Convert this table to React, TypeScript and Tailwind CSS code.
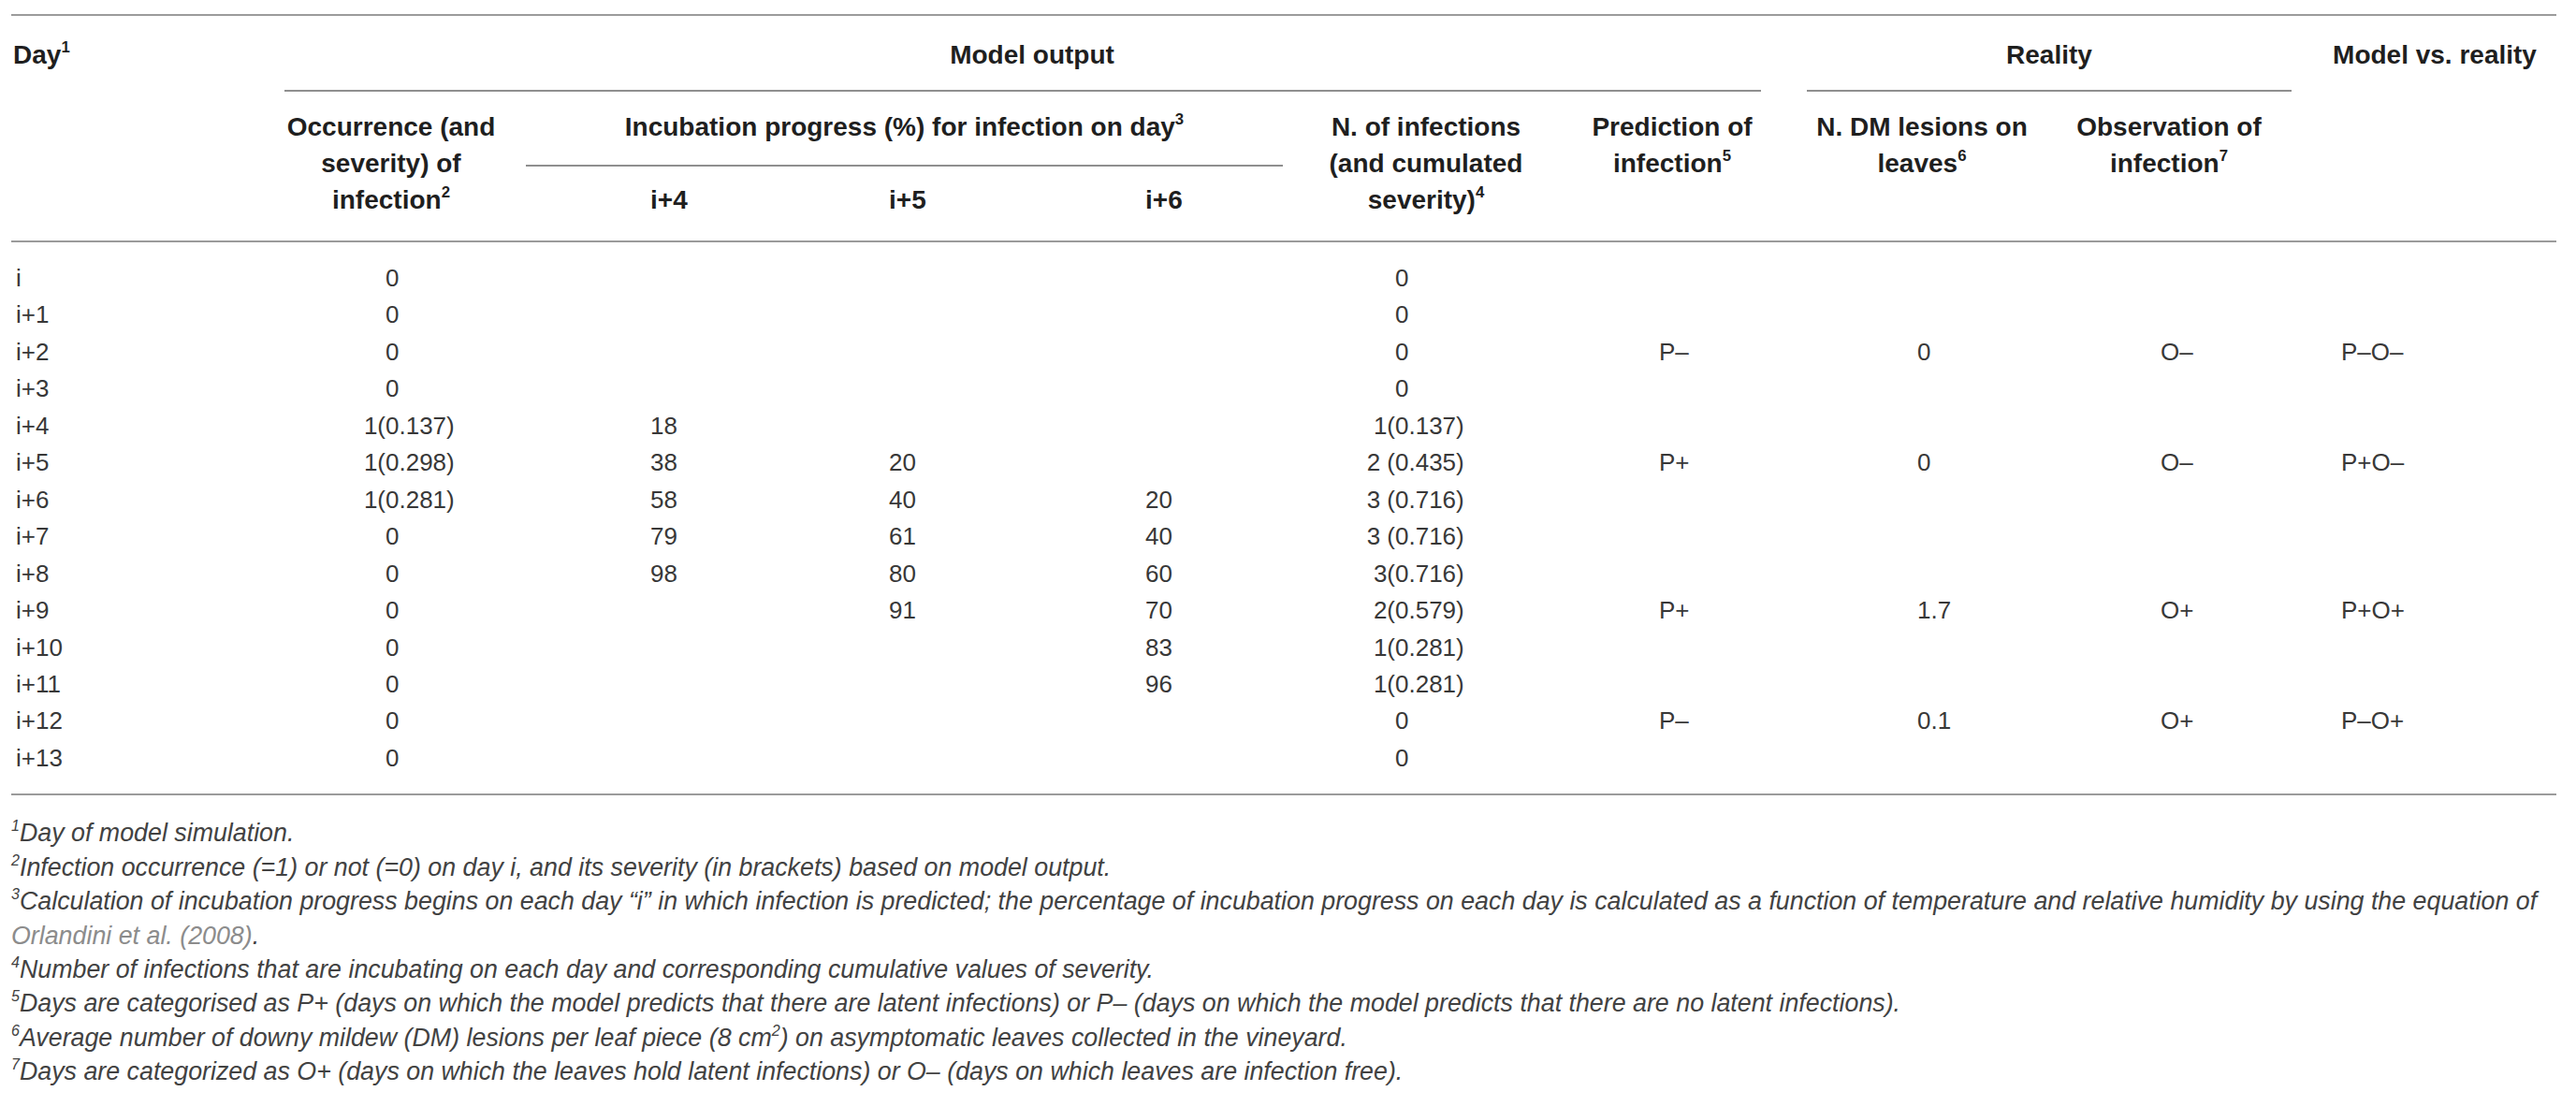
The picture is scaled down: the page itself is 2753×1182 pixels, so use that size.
type Row = {
  day: string;
  occ: string;
  i4?: string;
  i5?: string;
  i6?: string;
  ninf: string;
  pred?: string;
  ndm?: string;
  obs?: string;
  mvr?: string;
};

const rows: Row[] = [
  { day: "i", occ: "0", ninf: "0" },
  { day: "i+1", occ: "0", ninf: "0" },
  { day: "i+2", occ: "0", ninf: "0", pred: "P–", ndm: "0", obs: "O–", mvr: "P–O–" },
  { day: "i+3", occ: "0", ninf: "0" },
  { day: "i+4", occ: "1(0.137)", i4: "18", ninf: "1(0.137)" },
  { day: "i+5", occ: "1(0.298)", i4: "38", i5: "20", ninf: "2 (0.435)", pred: "P+", ndm: "0", obs: "O–", mvr: "P+O–" },
  { day: "i+6", occ: "1(0.281)", i4: "58", i5: "40", i6: "20", ninf: "3 (0.716)" },
  { day: "i+7", occ: "0", i4: "79", i5: "61", i6: "40", ninf: "3 (0.716)" },
  { day: "i+8", occ: "0", i4: "98", i5: "80", i6: "60", ninf: "3(0.716)" },
  { day: "i+9", occ: "0", i5: "91", i6: "70", ninf: "2(0.579)", pred: "P+", ndm: "1.7", obs: "O+", mvr: "P+O+" },
  { day: "i+10", occ: "0", i6: "83", ninf: "1(0.281)" },
  { day: "i+11", occ: "0", i6: "96", ninf: "1(0.281)" },
  { day: "i+12", occ: "0", ninf: "0", pred: "P–", ndm: "0.1", obs: "O+", mvr: "P–O+" },
  { day: "i+13", occ: "0", ninf: "0" },
];

// split "1(0.137)" so the digit after the bracket lines up with a bare "0"
function split(v: string): [string, string] {
  const k = v.indexOf("(");
  return k < 0 ? ["", v] : [v.slice(0, k + 1), v.slice(k + 1)];
}

const cols =
  "grid grid-cols-[292px_228px_308px_260px_300px_248px_278px_256px_272px_278px]";

function Sup({ children }: { children: React.ReactNode }) {
  return <sup className="text-[0.6em] top-[-0.7em]">{children}</sup>;
}

function Aligned({ v, lead }: { v: string; lead: string }) {
  const [a, b] = split(v);
  return (
    <div className="flex">
      <span className={`${lead} text-right whitespace-pre`}>{a}</span>
      <span>{b}</span>
    </div>
  );
}

export default function App() {
  return (
    <div className="min-h-screen bg-white pl-[12px] pt-[15px] text-[#1f1f1f]">
      <div className="w-[2720px]">
        {/* header */}
        <div className="border-t-2 border-[#9b9b9b] font-['Liberation_Sans',Arial,sans-serif] text-[28px] font-bold leading-[39px]">
          <div className={cols}>
            <div className="pt-[22px] pl-[2px]">
              Day<Sup>1</Sup>
            </div>
            <div className="col-span-6 mr-[44px] border-b-2 border-[#8f8f8f] pt-[22px] pb-[18px] pl-[20px] text-center">
              Model output
            </div>
            <div className="col-span-2 mx-[5px] border-b-2 border-[#8f8f8f] pt-[22px] pb-[18px] text-center">
              Reality
            </div>
            <div className="pt-[22px] pl-[18px] text-center">Model vs. reality</div>
          </div>
          <div className={`${cols} h-[161px] border-b-2 border-[#9b9b9b]`}>
            <div />
            <div className="pt-[18px] text-center">
              Occurrence (and
              <br />
              severity) of
              <br />
              infection<Sup>2</Sup>
            </div>
            <div className="col-span-3 pt-[18px]">
              <div className="ml-[30px] mr-[29px] border-b-2 border-[#8f8f8f] pb-[21px] text-center">
                Incubation progress (%) for infection on day<Sup>3</Sup>
              </div>
              <div className="grid grid-cols-[308px_260px_300px] pt-[16px]">
                <div className="pl-[163px]">i+4</div>
                <div className="pl-[110px]">i+5</div>
                <div className="pl-[124px]">i+6</div>
              </div>
            </div>
            <div className="pt-[18px] text-center">
              N. of infections
              <br />
              (and cumulated
              <br />
              severity)<Sup>4</Sup>
            </div>
            <div className="pt-[18px] text-center">
              Prediction of
              <br />
              infection<Sup>5</Sup>
            </div>
            <div className="pt-[18px] text-center">
              N. DM lesions on
              <br />
              leaves<Sup>6</Sup>
            </div>
            <div className="pt-[18px] text-center">
              Observation of
              <br />
              infection<Sup>7</Sup>
            </div>
            <div />
          </div>
        </div>

        {/* body */}
        <div className="border-b-2 border-[#9b9b9b] pt-[19px] pb-[18px] font-['Liberation_Sans',Arial,sans-serif] text-[26px] leading-[39.45px] text-[#383838]">
          {rows.map((r) => (
            <div key={r.day} className={cols}>
              <div className="pl-[5px]">{r.day}</div>
              <Aligned v={r.occ} lead="w-[108px]" />
              <div className="pl-[163px]">{r.i4}</div>
              <div className="pl-[110px]">{r.i5}</div>
              <div className="pl-[124px]">{r.i6}</div>
              <Aligned v={r.ninf} lead="w-[91px]" />
              <div className="pl-[125px]">{r.pred}</div>
              <div className="pl-[123px]">{r.ndm}</div>
              <div className="pl-[127px]">{r.obs}</div>
              <div className="pl-[48px]">{r.mvr}</div>
            </div>
          ))}
        </div>

        {/* footnotes */}
        <div className="whitespace-nowrap pt-[22px] font-['Liberation_Sans',Arial,sans-serif] text-[26.8px] italic leading-[36.4px] text-[#424242]">
          <p>
            <Sup>1</Sup>Day of model simulation.
          </p>
          <p>
            <Sup>2</Sup>Infection occurrence (=1) or not (=0) on day i, and its severity (in brackets) based on model output.
          </p>
          <p>
            <Sup>3</Sup>Calculation of incubation progress begins on each day “i” in which infection is predicted; the percentage of incubation progress on each day is calculated as a function of temperature and relative humidity by using the equation of
          </p>
          <p>
            <span className="text-[#8c8c8c]">Orlandini et al. (2008)</span>.
          </p>
          <p>
            <Sup>4</Sup>Number of infections that are incubating on each day and corresponding cumulative values of severity.
          </p>
          <p>
            <Sup>5</Sup>Days are categorised as P+ (days on which the model predicts that there are latent infections) or P– (days on which the model predicts that there are no latent infections).
          </p>
          <p>
            <Sup>6</Sup>Average number of downy mildew (DM) lesions per leaf piece (8 cm<Sup>2</Sup>) on asymptomatic leaves collected in the vineyard.
          </p>
          <p>
            <Sup>7</Sup>Days are categorized as O+ (days on which the leaves hold latent infections) or O– (days on which leaves are infection free).
          </p>
        </div>
      </div>
    </div>
  );
}
